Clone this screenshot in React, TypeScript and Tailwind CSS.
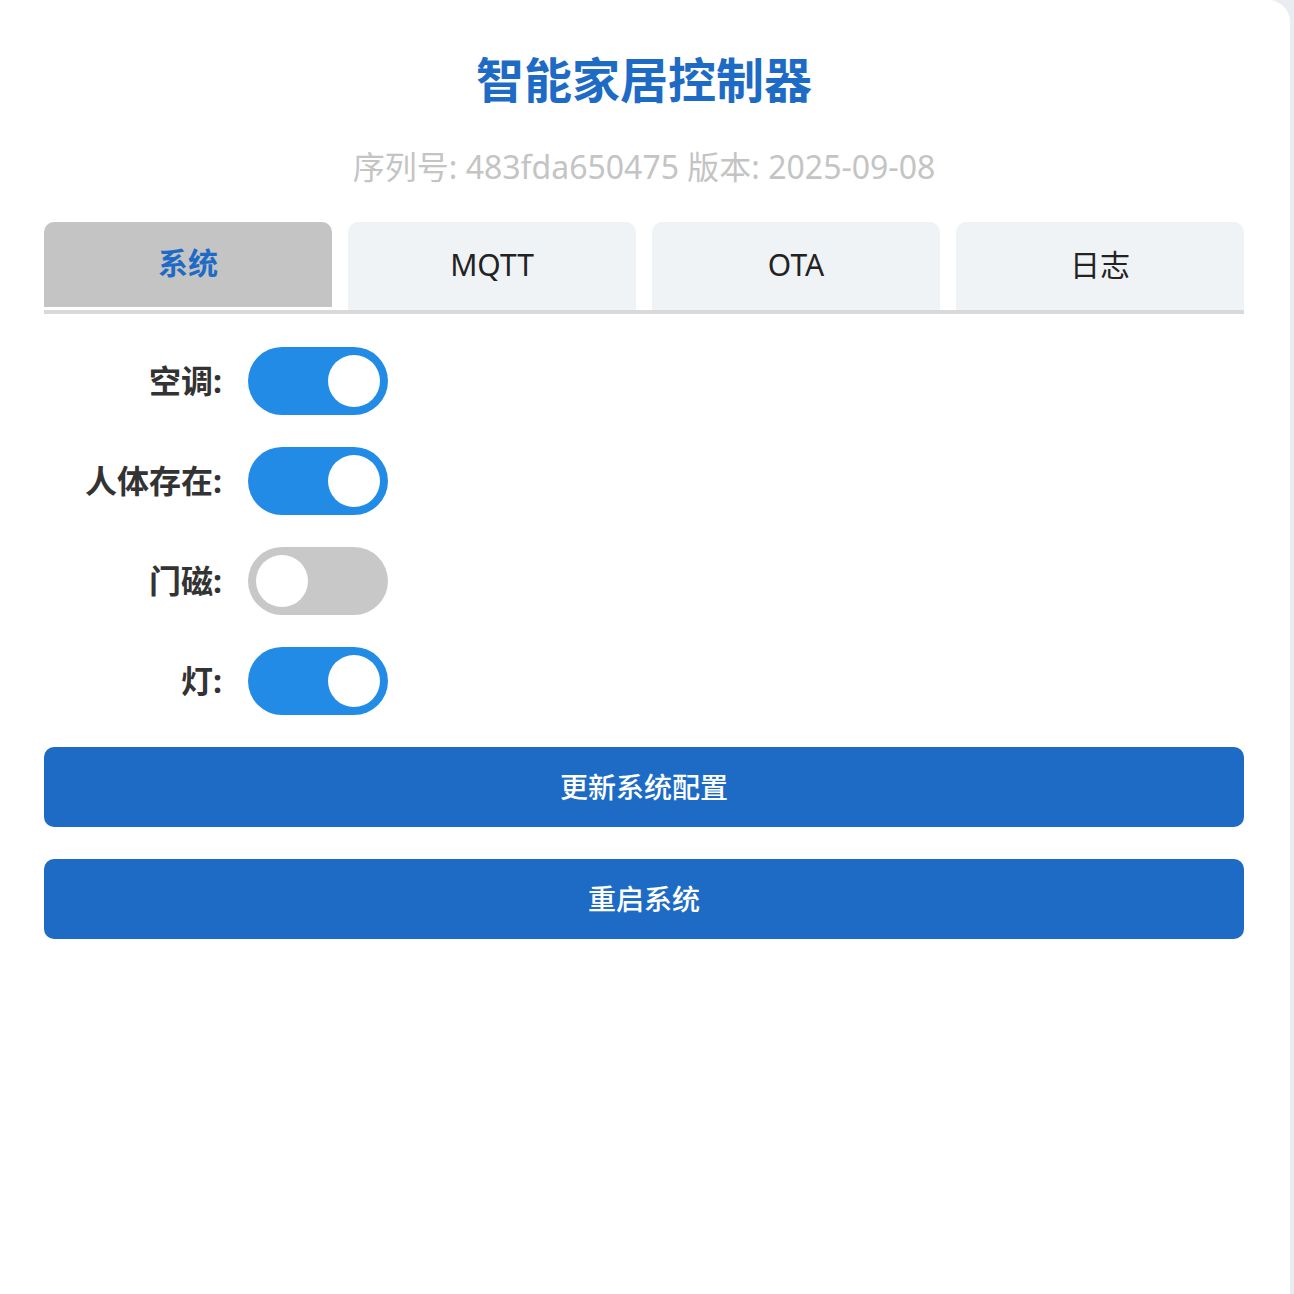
import { useState } from "react";

const tabs = ["系统", "MQTT", "OTA", "日志"];

const Toggle = ({ on, onClick }: { on: boolean; onClick: () => void }) => (
  <button
    onClick={onClick}
    className={`relative h-[68px] w-[140px] shrink-0 rounded-full transition-colors ${
      on ? "bg-[#228be6]" : "bg-[#c8c8c8]"
    }`}
  >
    <span
      className={`absolute top-[8px] h-[52px] w-[52px] rounded-full bg-white transition-all ${
        on ? "left-[80px]" : "left-[8px]"
      }`}
    />
  </button>
);

export default function App() {
  const [active, setActive] = useState(0);
  const [state, setState] = useState({ ac: true, body: true, door: false, light: true });

  const rows: { key: keyof typeof state; label: string }[] = [
    { key: "ac", label: "空调:" },
    { key: "body", label: "人体存在:" },
    { key: "door", label: "门磁:" },
    { key: "light", label: "灯:" },
  ];

  return (
    <div
      className="min-h-[1294px] bg-[#e9edf1] pr-[4px]"
      style={{ fontFamily: '"Noto Sans", "Noto Sans CJK SC", sans-serif' }}
    >
      <div className="min-h-[1294px] rounded-tr-[22px] bg-white pl-[44px] pr-[46px] pt-[50px]">
        <h1 className="text-center text-[48px] font-bold leading-[60px] text-[#1e6bc6]">
          智能家居控制器
        </h1>
        <p className="mt-[35px] text-center text-[32px] leading-[44px] text-[#c4c4c4]">
          序列号: 483fda650475 版本: 2025-09-08
        </p>

        <div className="mt-[33px] flex gap-[16px] border-b-[4px] border-[#d9d9d9]">
          {tabs.map((t, i) => (
            <button
              key={t}
              onClick={() => setActive(i)}
              className={`flex h-[85px] flex-1 items-center justify-center rounded-t-[10px] pb-[4px] text-[30px] ${
                i === active
                  ? "mb-[3px] bg-[#c4c4c4] font-bold text-[#1e6bc6]"
                  : "h-[88px] bg-[#f0f3f6] text-[#222]"
              }`}
            >
              {t}
            </button>
          ))}
        </div>

        <div className="mt-[33px] flex flex-col gap-[32px]">
          {rows.map((r) => (
            <div key={r.key} className="flex items-center gap-[26px]">
              <span className="w-[178px] text-right text-[32px] font-bold text-[#333]">
                {r.label}
              </span>
              <Toggle
                on={state[r.key]}
                onClick={() => setState({ ...state, [r.key]: !state[r.key] })}
              />
            </div>
          ))}
        </div>

        <div className="mt-[32px] flex flex-col gap-[32px]">
          <button className="h-[80px] w-full rounded-[10px] bg-[#1e6bc6] text-[28px] font-medium text-white">
            更新系统配置
          </button>
          <button className="h-[80px] w-full rounded-[10px] bg-[#1e6bc6] text-[28px] font-medium text-white">
            重启系统
          </button>
        </div>
      </div>
    </div>
  );
}
